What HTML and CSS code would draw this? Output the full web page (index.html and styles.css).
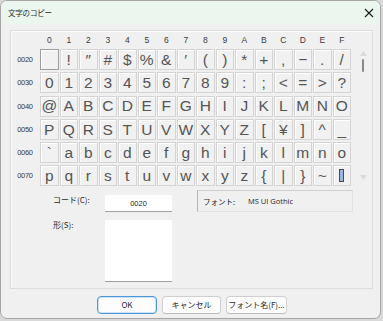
FILE: index.html
```html
<!DOCTYPE html>
<html lang="ja">
<head>
    <meta charset="UTF-8">
    <title>文字のコピー</title>
    <link rel="stylesheet" href="styles.css">
</head>
<body>
    <div class="window">
        <div class="titlebar">
            <span class="title">文字のコピー</span>
            <svg class="close" width="10" height="10" viewBox="0 0 10 10">
                <path d="M1 1 L9 9 M9 1 L1 9" stroke="#1c1c1c" stroke-width="1.1" fill="none"/>
            </svg>
        </div>
        <div class="content">
            <div class="panel">
                <div class="table-wrap">
                    <div class="char-grid" id="charGrid"></div>
                    <div class="scrollbar">
                        <svg class="arrow" width="7" height="5" viewBox="0 0 7 5"><path d="M0 5 L3.5 0 L7 5 Z" fill="#dadada"/></svg>
                        <div class="thumb"></div>
                        <div class="track"></div>
                        <svg class="arrow" width="7" height="5" viewBox="0 0 7 5"><path d="M0 0 L3.5 5 L7 0 Z" fill="#dadada"/></svg>
                    </div>
                </div>
                <div class="info">
                    <div class="fields">
                        <label class="field-label">コード(C):</label>
                        <div class="code-box">0020</div>
                        <label class="field-label">形(S):</label>
                        <div class="shape-box"></div>
                    </div>
                    <div class="font-box">
                        <span class="font-key">フォント:</span>
                        <span class="font-name">MS UI Gothic</span>
                    </div>
                </div>
            </div>
            <div class="buttons">
                <button class="btn btn-default">OK</button>
                <button class="btn btn-cancel">キャンセル</button>
                <button class="btn btn-font">フォント名(F)...</button>
            </div>
        </div>
    </div>

    <script>
        const rows = [
            { code: '0020', chars: [' ', '!', '″', '#', '$', '%', '&', '′', '(', ')', '*', '+', ',', '−', '.', '/'] },
            { code: '0030', chars: ['0', '1', '2', '3', '4', '5', '6', '7', '8', '9', ':', ';', '<', '=', '>', '?'] },
            { code: '0040', chars: ['@', 'A', 'B', 'C', 'D', 'E', 'F', 'G', 'H', 'I', 'J', 'K', 'L', 'M', 'N', 'O'] },
            { code: '0050', chars: ['P', 'Q', 'R', 'S', 'T', 'U', 'V', 'W', 'X', 'Y', 'Z', '[', '¥', ']', '^', '_'] },
            { code: '0060', chars: ['`', 'a', 'b', 'c', 'd', 'e', 'f', 'g', 'h', 'i', 'j', 'k', 'l', 'm', 'n', 'o'] },
            { code: '0070', chars: ['p', 'q', 'r', 's', 't', 'u', 'v', 'w', 'x', 'y', 'z', '{', '|', '}', '~', null] }
        ];

        const grid = document.getElementById('charGrid');
        grid.appendChild(document.createElement('div'));
        '0123456789ABCDEF'.split('').forEach(h => {
            const head = document.createElement('div');
            head.className = 'col-head';
            head.textContent = h;
            grid.appendChild(head);
        });

        rows.forEach((row, r) => {
            const label = document.createElement('div');
            label.className = 'row-head';
            label.textContent = row.code;
            grid.appendChild(label);
            row.chars.forEach((ch, c) => {
                const cell = document.createElement('div');
                cell.className = 'cell' + (r === 0 && c === 0 ? ' selected' : '');
                if (ch === null) {
                    cell.innerHTML = '<span class="del-glyph"></span>';
                } else {
                    cell.textContent = ch;
                }
                grid.appendChild(cell);
            });
        });
    </script>
</body>
</html>
```

FILE: styles.css
```css
body {
    margin: 0;
    background: #d9d9d9;
    font-family: "Noto Sans CJK JP", "Noto Sans", sans-serif;
    color: #1f1f1f;
}
.window {
    width: 381px;
    height: 319px;
    box-sizing: border-box;
    border: 1px solid #a6a6a6;
    border-radius: 7px;
    background: #f0f0f0;
    overflow: hidden;
}
.titlebar {
    height: 23px;
    background: #ebf6ef;
    display: flex;
    align-items: center;
    justify-content: space-between;
    padding: 0 5px 0 7px;
}
.title {
    font-size: 7.5px;
    line-height: 1;
    letter-spacing: -0.2px;
}
.close {
    display: block;
    margin-right: 1px;
}
.content {
    padding: 6px 7px 0 9px;
}
.panel {
    height: 257px;
    border: 1px solid #dcdcdc;
    box-shadow: inset 1px 1px 0 #fbfbfb;
}
.table-wrap {
    display: flex;
    padding-top: 2px;
}
.char-grid {
    display: grid;
    grid-template-columns: 28px repeat(16, 18.5px);
    grid-template-rows: 14px repeat(6, 21px);
    column-gap: 1px;
    row-gap: 2.2px;
}
.col-head {
    font-family: "Liberation Sans", Arial, sans-serif;
    font-size: 8.5px;
    color: #3a3a3a;
    text-align: center;
    line-height: 14px;
}
.row-head {
    font-family: "Liberation Sans", Arial, sans-serif;
    font-size: 7.5px;
    letter-spacing: -0.3px;
    color: #3a3a3a;
    text-align: center;
    line-height: 21px;
}
.cell {
    box-sizing: border-box;
    background: #f1f1f1;
    border: 1px solid #d4d4d4;
    box-shadow: inset 1px 1px 0 #ffffff;
    font-family: "Liberation Sans", Arial, sans-serif;
    font-size: 15.5px;
    color: #555555;
    display: flex;
    align-items: center;
    justify-content: center;
    line-height: 1;
}
.cell.selected {
    border-color: #9c9c9c;
}
.del-glyph {
    width: 3px;
    height: 11px;
    border: 1px solid #4a4a4a;
    background: #9ab8dd;
}
.scrollbar {
    width: 14px;
    margin-left: 5px;
    padding-top: 18px;
    display: flex;
    flex-direction: column;
    align-items: center;
}
.arrow {
    display: block;
}
.thumb {
    width: 2px;
    height: 13px;
    margin-top: 3px;
    background: #8a8a8a;
    border-radius: 1px;
}
.track {
    height: 103px;
}
.info {
    display: flex;
    padding: 4px 0 0 42px;
}
.fields {
    display: grid;
    grid-template-columns: 52px 67px;
    grid-template-rows: 17px 62px;
    row-gap: 8px;
    margin-top: 5px;
}
.field-label {
    font-size: 8px;
    line-height: 10px;
    color: #2a2a2a;
}
.code-box {
    background: #ffffff;
    border-bottom: 1px solid #a0a0a0;
    font-family: "Liberation Sans", Arial, sans-serif;
    font-size: 7.5px;
    text-align: center;
    line-height: 17px;
}
.shape-box {
    background: #ffffff;
    border-bottom: 1px solid #a0a0a0;
}
.font-box {
    box-sizing: border-box;
    width: 156px;
    height: 22px;
    margin-left: 25px;
    background: #f0f0f0;
    border: 1px solid #e2e2e2;
    border-left-color: #b4b4b4;
    border-top-color: #cfcfcf;
    display: flex;
    align-items: center;
    font-size: 7.5px;
    padding-left: 5px;
}
.font-key {
    width: 45px;
}
.font-name {
    font-family: "Open Sans", "Liberation Sans", sans-serif;
    font-size: 7.5px;
}
.buttons {
    display: flex;
    gap: 5px;
    padding: 7px 0 0 87px;
}
.btn {
    width: 60px;
    height: 18px;
    box-sizing: border-box;
    background: #fdfdfd;
    border: 1px solid #d0d0d0;
    border-bottom-color: #b9b9b9;
    border-radius: 4px;
    font-family: "Noto Sans CJK JP", "Noto Sans", sans-serif;
    font-size: 8px;
    color: #1f1f1f;
    padding: 0;
    line-height: 1;
}
.btn-cancel {
    width: 59px;
}
.btn-font {
    width: 61px;
}
.btn-default {
    border: 1px solid #4b97dc;
    box-shadow: inset 0 0 0 1px #cfe3f6;
}
```
